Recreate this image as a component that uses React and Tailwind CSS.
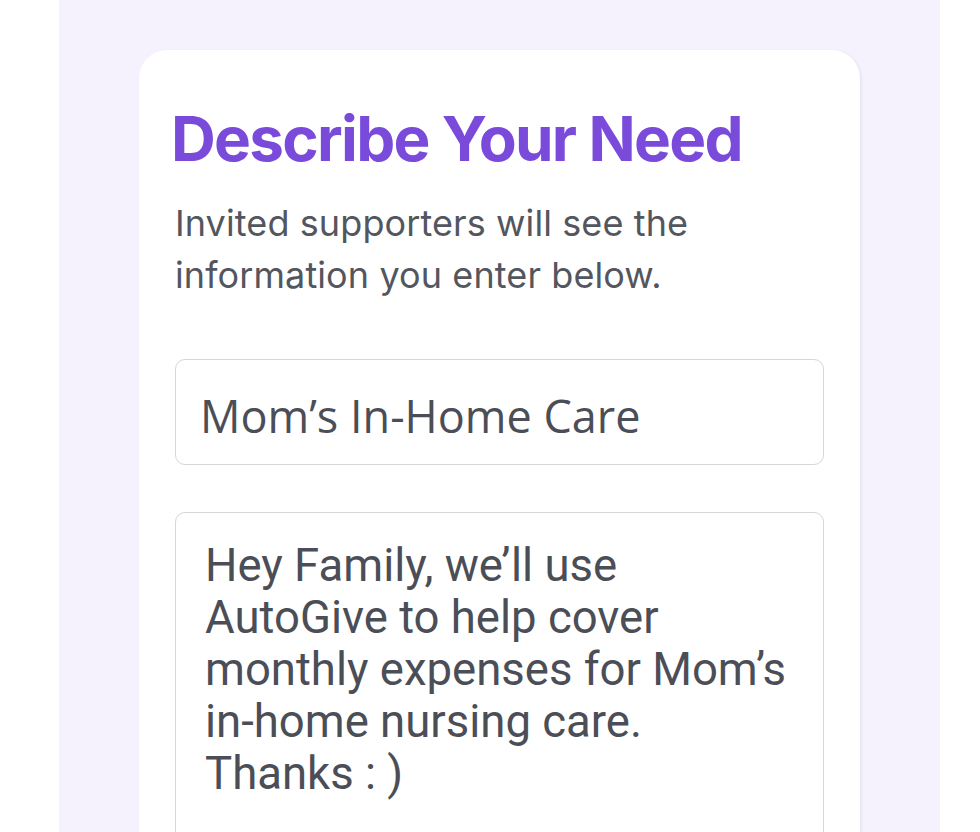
import React, { useState } from 'react';

function App() {
  const [title, setTitle] = useState('Mom’s In-Home Care');
  const [message, setMessage] = useState(
    'Hey Family, we’ll use AutoGive to help cover monthly expenses for Mom’s in-home nursing care.\nThanks : )'
  );

  return (
    <div className="min-h-screen bg-white">
      <div className="ml-[59px] w-[881px] min-h-screen bg-[#f5f2fd] px-[80px] pt-[50px]">
        <div className="rounded-[28px] bg-white px-9 pt-[58px] pb-10 shadow-[1px_1px_3px_rgba(0,0,0,0.09)]">
          <h1 className="-ml-1 font-['Inter',sans-serif] text-[62px] font-bold leading-none tracking-[-1.7px] text-[#7a4bdb]">
            Describe Your Need
          </h1>
          <p className="mt-[27px] font-['Inter',sans-serif] text-[36px] leading-[52px] tracking-[0.1px] text-[#53565e]">
            Invited supporters will see the
            <br />
            information you enter below.
          </p>

          <input
            type="text"
            value={title}
            onChange={(e) => setTitle(e.target.value)}
            className="mt-[58px] block h-[106px] w-full rounded-[10px] border border-[#d6d6db] bg-white pl-[24px] pt-[6px] font-['Open_Sans',sans-serif] text-[45px] leading-none text-[#4b4e57] outline-none"
          />

          <textarea
            value={message}
            onChange={(e) => setMessage(e.target.value)}
            className="mt-[47px] block h-[400px] w-full resize-none rounded-[10px] border border-[#d6d6db] bg-white pl-[29px] pr-[22px] pt-[27px] font-['Roboto',sans-serif] text-[45.5px] leading-[52px] text-[#4b4e57] outline-none"
          />
        </div>
      </div>
    </div>
  );
}

export default App;
